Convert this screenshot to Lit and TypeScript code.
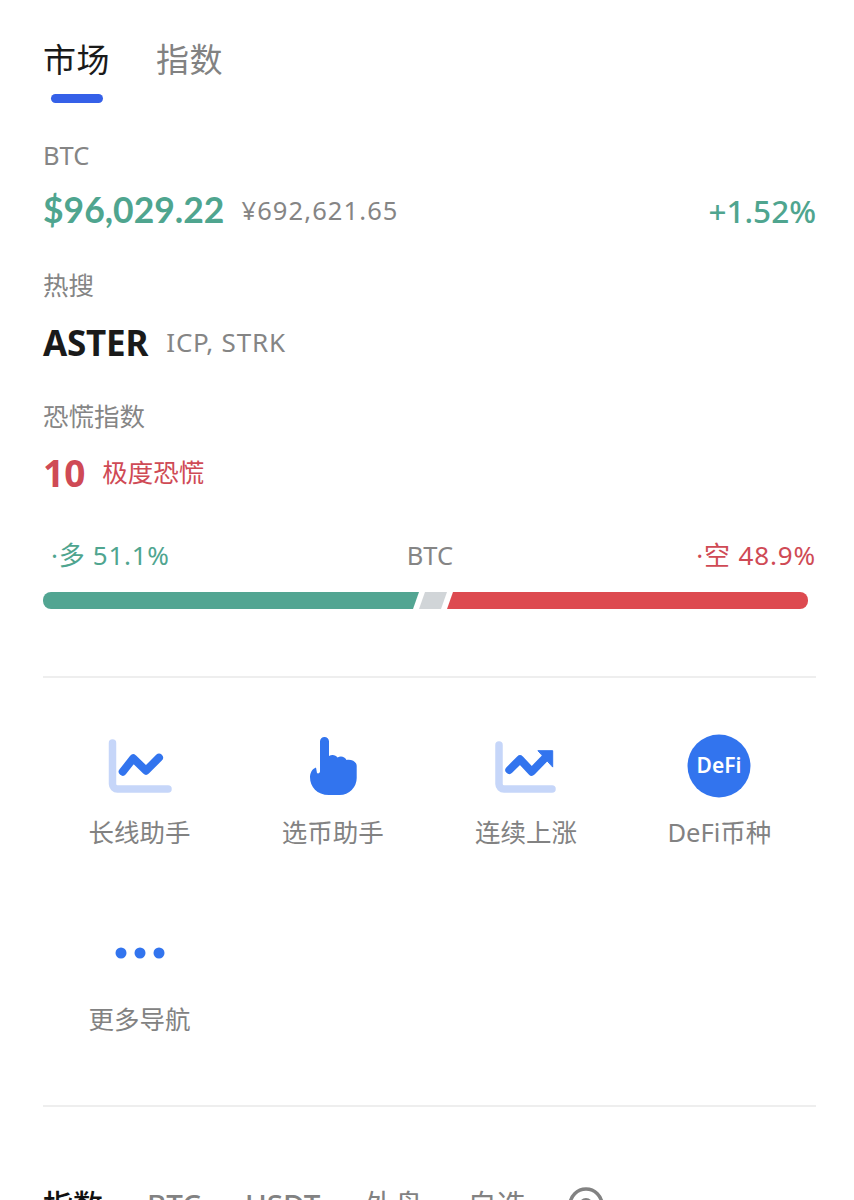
import { LitElement, html, css } from "lit";
import { customElement } from "lit/decorators.js";

@customElement("app-root")
export class AppRoot extends LitElement {
  static styles = css`
    :host {
      display: block;
      height: 1200px;
      overflow: hidden;
      background: #fff;
      box-sizing: border-box;
      padding: 0 38px 0 43px;
      font-family: "Noto Sans", "Noto Sans CJK SC", sans-serif;
      color: #828282;
    }
    .row { display: flex; align-items: center; }
    .tabs { height: 40px; margin-top: 40px; gap: 46px; font-size: 33px; line-height: 40px; letter-spacing: 0.5px; }
    .tabs .on { color: #1a1a1a; }
    .indicator { width: 52px; height: 9px; border-radius: 5px; background: #3560e8; margin: 14px 0 0 8px; }
    .label { font-size: 25.500px; line-height: 30px; color: #858585; }
    .btc { margin-top: 37px; }
    .price-row { height: 44px; margin-top: 18px; }
    .price { font-family: Lato, sans-serif; font-size: 35.500px; font-weight: 700; color: #4fa58f; line-height: 44px; }
    .cny { font-family: "Noto Sans", sans-serif; font-size: 25.500px; margin-left: 17px; letter-spacing: 1.100px; color: #858585; }
    .pct { margin-left: auto; font-family: "Noto Sans", sans-serif; font-size: 31.500px; font-weight: 500; color: #4fa58f; }
    .hot { margin-top: 38px; }
    .hot-row { height: 44px; margin-top: 20px; }
    .aster { font-family: "Noto Sans", sans-serif; font-size: 35px; font-weight: 700; color: #1a1a1a; letter-spacing: -0.200px; }
    .alts { font-family: "Noto Sans", sans-serif; font-size: 26px; margin-left: 18px; letter-spacing: 0.800px; color: #858585; }
    .fear { margin-top: 37px; }
    .fear-row { height: 44px; margin-top: 19px; color: #cf4a55; }
    .fear-num { font-family: "Noto Sans", sans-serif; font-size: 37px; font-weight: 700; padding-top: 1px; }
    .fear-text { font-size: 25.500px; margin-left: 17px; padding-bottom: 3px; }
    .ratio { height: 30px; margin-top: 46px; font-size: 26px; line-height: 30px; justify-content: space-between; }
    .long { color: #4fa58f; margin-left: 8px; letter-spacing: 0.700px; }
    .mid { color: #858585; margin-right: 6px; font-size: 25.500px; }
    .short { color: #cf4a55; letter-spacing: 0.850px; }
    .bar { display: flex; width: 765px; height: 17px; margin-top: 22px; border-radius: 8px; overflow: hidden; }
    .seg { height: 100%; }
    .seg.g { flex: 0 0 376px; background: #52a592; clip-path: polygon(0 0, 100% 0, calc(100% - 6px) 100%, 0 100%); }
    .seg.m { flex: 0 0 28px; background: #d1d5d8; clip-path: polygon(6px 0, 100% 0, calc(100% - 6px) 100%, 0 100%); }
    .seg.r { flex: 1; background: #dd4a50; clip-path: polygon(6px 0, 100% 0, 100% 100%, 0 100%); }
    .rule { height: 2px; background: #eeeeee; }
    .rule.a { margin-top: 67px; }
    .grid { display: grid; grid-template-columns: repeat(4, 193.250px); row-gap: 71px; margin-top: 54px; }
    .cell { display: flex; flex-direction: column; align-items: center; }
    .cell svg { display: block; width: 80px; height: 70px; }
    .cell .name { font-size: 25.500px; line-height: 32px; margin-top: 14px; color: #828282; white-space: nowrap; }
    .rule.b { margin-top: 70px; }
    .bottom { height: 40px; margin-top: 78px; font-size: 29.500px; line-height: 40px; gap: 44px; }
    .bottom .on { color: #111; font-size: 30px; font-weight: 500; }
    .bottom b { font-weight: 500; }
    .bottom svg { display: block; width: 40px; height: 40px; flex: none; margin-left: -4px; }
  `;

  render() {
    return html`
      <div class="row tabs"><span class="on">市场</span><span>指数</span></div>
      <div class="indicator"></div>

      <div class="label btc">BTC</div>
      <div class="row price-row">
        <span class="price">$96,029.22</span>
        <span class="cny">¥692,621.65</span>
        <span class="pct">+1.52%</span>
      </div>

      <div class="label hot">热搜</div>
      <div class="row hot-row">
        <span class="aster">ASTER</span>
        <span class="alts">ICP, STRK</span>
      </div>

      <div class="label fear">恐慌指数</div>
      <div class="row fear-row">
        <span class="fear-num">10</span>
        <span class="fear-text">极度恐慌</span>
      </div>

      <div class="row ratio">
        <span class="long">·多 51.1%</span>
        <span class="mid">BTC</span>
        <span class="short">·空 48.9%</span>
      </div>
      <div class="bar">
        <div class="seg g"></div>
        <div class="seg m"></div>
        <div class="seg r"></div>
      </div>

      <div class="rule a"></div>

      <div class="grid">
        <div class="cell">
          <svg viewBox="0 0 80 70" fill="none" stroke-linecap="round" stroke-linejoin="round">
            <path d="M12.500 11V52a5 5 0 0 0 5 5H68" stroke="#c6d6f9" stroke-width="7.500"/>
            <path d="M22.700 39.700L33.300 26.300 46 38.700 59 25.700" stroke="#3274ee" stroke-width="8"/>
          </svg>
          <div class="name">长线助手</div>
        </div>
        <div class="cell">
          <svg viewBox="0 0 80 70" fill="#3274ee">
            <path d="M27 9.500a4.500 4.500 0 0 1 9 0V24c3-2 7-1 8.500 1.500 3-2 7.500-1 9 2.500 4-1 10.200 1 10.200 6V46a17 17 0 0 1-17 17H36C24 63 17 55 17 45c0-4 2-8 6-9.500l1 5.500c1 1 3 0 3-1.500z"/>
          </svg>
          <div class="name">选币助手</div>
        </div>
        <div class="cell">
          <svg viewBox="0 0 80 70" fill="none" stroke-linecap="round" stroke-linejoin="round">
            <path d="M13 13V52a5 5 0 0 0 5 5H66" stroke="#c6d6f9" stroke-width="7.500"/>
            <path d="M23.300 38L34 27.300 45.700 39.700 60 25" stroke="#3274ee" stroke-width="8"/>
            <path d="M52.300 18.700H66.700V34.700z" fill="#3274ee" stroke="#3274ee" stroke-width="1"/>
          </svg>
          <div class="name">连续上涨</div>
        </div>
        <div class="cell">
          <svg viewBox="0 0 80 70">
            <circle cx="40" cy="34" r="31.500" fill="#3274ee"/>
            <text x="40" y="41" text-anchor="middle" fill="#fff" font-family="'Noto Sans', sans-serif" font-size="21" font-weight="600">DeFi</text>
          </svg>
          <div class="name">DeFi币种</div>
        </div>
        <div class="cell">
          <svg viewBox="0 0 80 70" fill="#3274ee">
            <circle cx="21" cy="34" r="5.500"/>
            <circle cx="40" cy="34" r="5.500"/>
            <circle cx="59" cy="34" r="5.500"/>
          </svg>
          <div class="name">更多导航</div>
        </div>
      </div>

      <div class="rule b"></div>

      <div class="row bottom">
        <span class="on">指数</span>
        <span><b>BTC</b></span>
        <span><b>USDT</b></span>
        <span>外盘</span>
        <span>自选</span>
        <svg viewBox="0 0 40 40" fill="none" stroke="#828282">
          <circle cx="20" cy="20" r="16" stroke-width="3.500"/>
          <circle cx="20" cy="20" r="7" fill="#828282" stroke="none"/>
        </svg>
      </div>
    `;
  }
}
